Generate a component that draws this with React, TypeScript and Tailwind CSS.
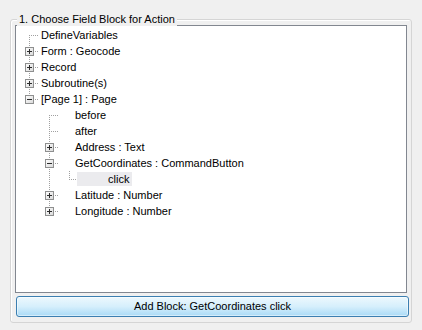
type Conn = "first" | "mid" | "last";
type Guide = "pipe" | "none";

type Node = {
  guides: Guide[];
  conn: Conn;
  expander?: "+" | "-";
  image: boolean;
  text: string;
  selected?: boolean;
};

const rows: Node[] = [
  { guides: [], conn: "first", image: false, text: "DefineVariables" },
  { guides: [], conn: "mid", expander: "+", image: false, text: "Form : Geocode" },
  { guides: [], conn: "mid", expander: "+", image: false, text: "Record" },
  { guides: [], conn: "mid", expander: "+", image: false, text: "Subroutine(s)" },
  { guides: [], conn: "last", expander: "-", image: false, text: "[Page 1] : Page" },
  { guides: ["none"], conn: "first", image: true, text: "before" },
  { guides: ["none"], conn: "mid", image: true, text: "after" },
  { guides: ["none"], conn: "mid", expander: "+", image: true, text: "Address : Text" },
  { guides: ["none"], conn: "mid", expander: "-", image: true, text: "GetCoordinates : CommandButton" },
  { guides: ["none", "pipe"], conn: "last", image: false, text: "click", selected: true },
  { guides: ["none"], conn: "mid", expander: "+", image: true, text: "Latitude : Number" },
  { guides: ["none"], conn: "last", expander: "+", image: true, text: "Longitude : Number" },
];

const dot = { stroke: "#a0a0a0", strokeWidth: 1, strokeDasharray: "1 1" };

function GuideCell({ kind }: { kind: Guide }) {
  return (
    <svg width="20" height="16" className="shrink-0">
      {kind === "pipe" && <line x1="10.5" y1="0" x2="10.5" y2="16" {...dot} />}
    </svg>
  );
}

function ConnCell({ conn, expander }: { conn: Conn; expander?: "+" | "-" }) {
  const y1 = conn === "first" ? 8 : 0;
  const y2 = conn === "last" ? 9 : 16;
  return (
    <svg width="20" height="16" className="shrink-0">
      <line x1="10.5" y1={y1} x2="10.5" y2={y2} {...dot} />
      <line x1="10" y1="8.5" x2="19" y2="8.5" {...dot} />
      {expander && (
        <>
          <defs>
            <linearGradient id="exp" x1="0" y1="0" x2="1" y2="1">
              <stop offset="0" stopColor="#ffffff" />
              <stop offset="1" stopColor="#d8d8d8" />
            </linearGradient>
          </defs>
          <rect x="6.5" y="4.5" width="8" height="8" fill="url(#exp)" stroke="#8e8f8f" />
          <line x1="8" y1="8.5" x2="13" y2="8.5" stroke="#2b2b2b" />
          {expander === "+" && <line x1="10.5" y1="6" x2="10.5" y2="11" stroke="#2b2b2b" />}
        </>
      )}
    </svg>
  );
}

function TreeRow({ node }: { node: Node }) {
  return (
    <div className="flex h-[16px] items-start">
      {node.guides.map((g, i) => (
        <GuideCell key={i} kind={g} />
      ))}
      <ConnCell conn={node.conn} expander={node.expander} />
      {node.selected ? (
        <div className="-ml-[2px] mt-[1px] h-[14px] w-[55px] bg-[#ebebee] pl-[31px] leading-[14px] whitespace-nowrap">
          {node.text}
        </div>
      ) : (
        <>
          {node.image && <div className="w-[14px] shrink-0" />}
          <div className="pl-[2px] leading-[16px] whitespace-nowrap">{node.text}</div>
        </>
      )}
    </div>
  );
}

export default function App() {
  return (
    <div
      className="w-[422px] h-[330px] bg-[#f0f0f0] px-[10px] pt-[19px] text-[11px] text-black overflow-hidden"
      style={{ fontFamily: '"Liberation Sans", Arial, sans-serif' }}
    >
      {/* Group box */}
      <div className="relative rounded-[3px] border border-[#d5d5d5] shadow-[inset_1px_1px_0_#ffffff] px-[4px] pt-[5px] pb-[5px]">
        <div className="absolute -top-[8px] left-[6px] bg-[#f0f0f0] px-[2px] leading-[14px]">
          1. Choose Field Block for Action
        </div>

        {/* Tree view */}
        <div className="h-[268px] border border-[#828790] bg-white pl-[3px] pt-[1px] overflow-hidden">
          {rows.map((r, i) => (
            <TreeRow key={i} node={r} />
          ))}
        </div>

        <button className="mt-[3px] ml-[1px] flex h-[21px] w-[393px] items-center justify-center rounded-[3px] border border-[#3c7fb1] bg-gradient-to-b from-[#edf8fd] via-[#d6effc] to-[#a9daf6] shadow-[inset_0_0_0_1px_rgba(255,255,255,0.5)] text-[11px] leading-none">
          Add Block: GetCoordinates click
        </button>
      </div>
    </div>
  );
}
